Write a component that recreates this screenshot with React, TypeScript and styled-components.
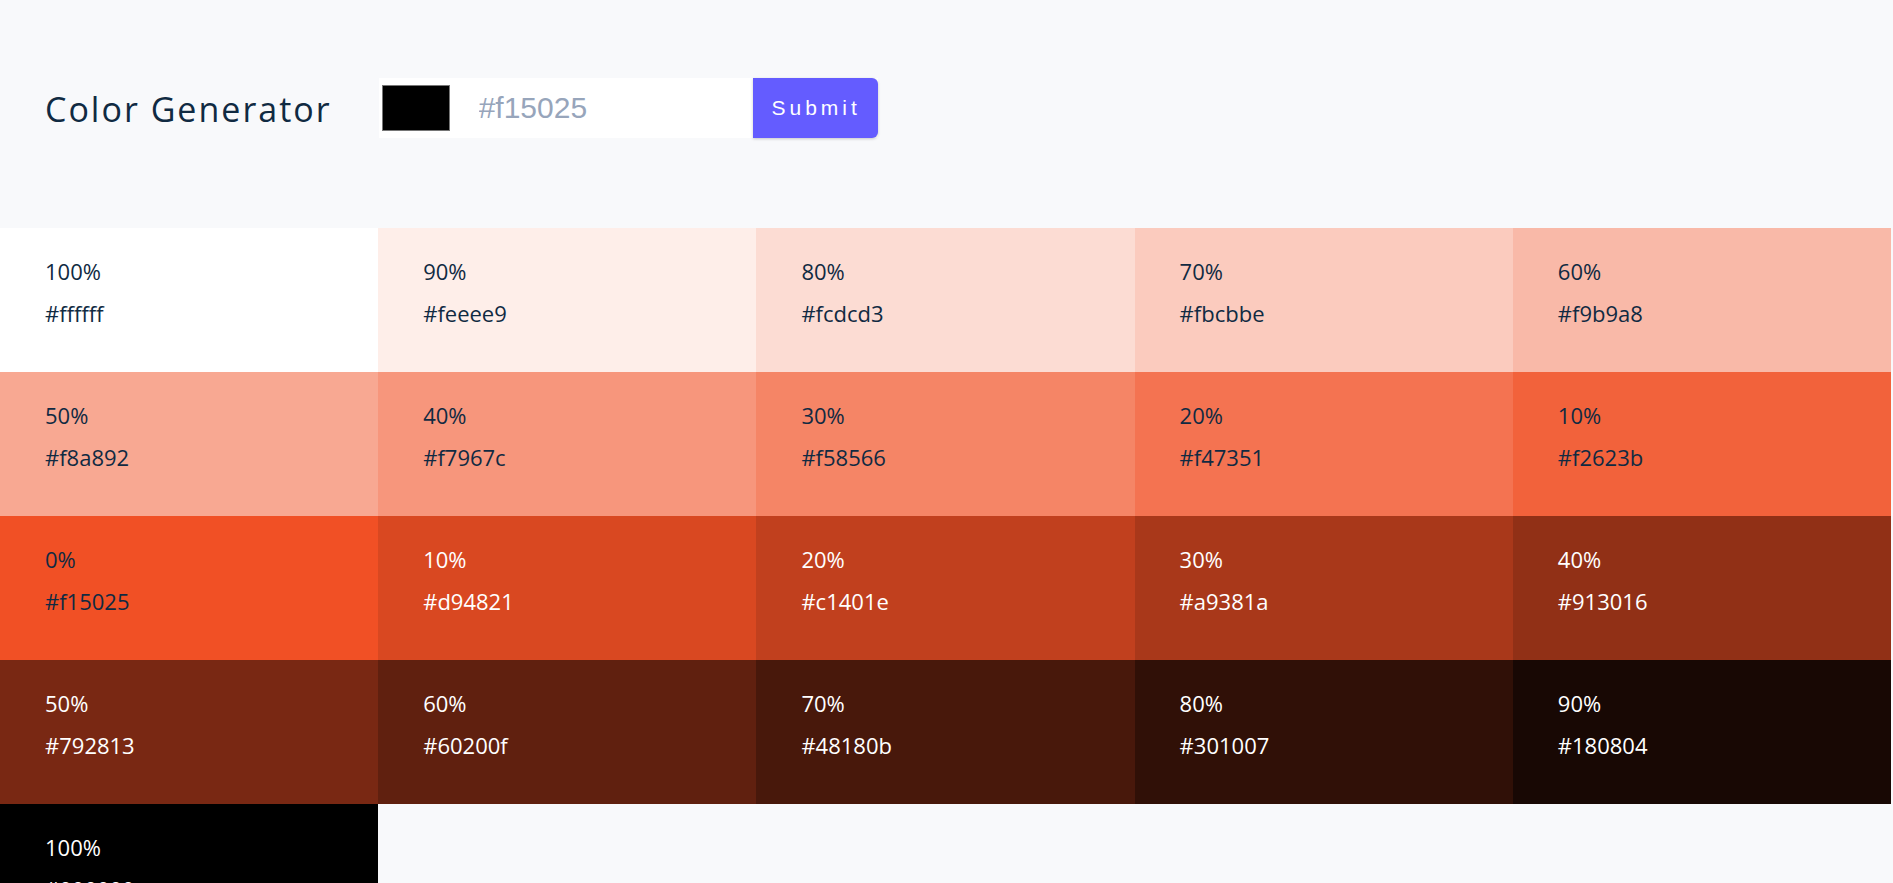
import React, { useState } from 'react'
import styled, { createGlobalStyle } from 'styled-components'

const GlobalStyle = createGlobalStyle`
  * {
    box-sizing: border-box;
  }
  body {
    margin: 0;
    background: #f8f9fb;
    font-family: 'Open Sans', 'Noto Sans', sans-serif;
    color: #102a42;
  }
`

const colors = [
  { weight: 100, hex: 'ffffff' },
  { weight: 90, hex: 'feeee9' },
  { weight: 80, hex: 'fcdcd3' },
  { weight: 70, hex: 'fbcbbe' },
  { weight: 60, hex: 'f9b9a8' },
  { weight: 50, hex: 'f8a892' },
  { weight: 40, hex: 'f7967c' },
  { weight: 30, hex: 'f58566' },
  { weight: 20, hex: 'f47351' },
  { weight: 10, hex: 'f2623b' },
  { weight: 0, hex: 'f15025' },
  { weight: 10, hex: 'd94821' },
  { weight: 20, hex: 'c1401e' },
  { weight: 30, hex: 'a9381a' },
  { weight: 40, hex: '913016' },
  { weight: 50, hex: '792813' },
  { weight: 60, hex: '60200f' },
  { weight: 70, hex: '48180b' },
  { weight: 80, hex: '301007' },
  { weight: 90, hex: '180804' },
  { weight: 100, hex: '000000' },
]

export default function App() {
  const [color, setColor] = useState('')

  return (
    <>
      <GlobalStyle />
      <Header>
        <Title>Color Generator</Title>
        <Form onSubmit={(e) => e.preventDefault()}>
          <ColorPicker type="color" defaultValue="#000000" />
          <HexInput
            type="text"
            value={color}
            placeholder="#f15025"
            onChange={(e) => setColor(e.target.value)}
          />
          <SubmitButton type="submit">Submit</SubmitButton>
        </Form>
      </Header>
      <Colors>
        {colors.map((c, index) => (
          <Swatch key={index} $bg={`#${c.hex}`} $light={index > 10}>
            <Percent>{c.weight}%</Percent>
            <HexValue>#{c.hex}</HexValue>
          </Swatch>
        ))}
      </Colors>
    </>
  )
}

const Header = styled.section`
  height: 228px;
  display: flex;
  align-items: center;
  padding: 0 0 12px 45px;
`

const Title = styled.h3`
  margin: 2px 47px 0 0;
  font-size: 34px;
  font-weight: 400;
  letter-spacing: 2px;
  line-height: 1.25;
  color: #102a42;
`

const Form = styled.form`
  display: flex;
  align-items: stretch;
  height: 60px;
  background: #fff;
`

const ColorPicker = styled.input`
  width: 74px;
  height: 60px;
  padding: 7px 3px;
  border: none;
  background: #fff;
  cursor: pointer;

  &::-webkit-color-swatch-wrapper {
    padding: 0;
  }
  &::-webkit-color-swatch {
    border: 1px solid #767676;
    border-radius: 0;
  }
`

const HexInput = styled.input`
  width: 300px;
  border: 2px solid transparent;
  padding: 0 20px 0 24px;
  font-family: 'Liberation Sans', Arial, sans-serif;
  font-size: 30px;
  color: #102a42;
  background: #fff;
  outline: none;

  &::placeholder {
    color: #97a5bb;
  }
`

const SubmitButton = styled.button`
  width: 125px;
  border: none;
  border-radius: 0 6px 6px 0;
  background: #645cff;
  color: #fff;
  font-family: 'Liberation Sans', Arial, sans-serif;
  font-size: 21px;
  letter-spacing: 4px;
  padding: 0 0 0 2px;
  box-shadow: 0 1px 3px rgba(0, 0, 0, 0.2);
  cursor: pointer;
`

const Colors = styled.section`
  width: 1891px;
  display: grid;
  grid-template-columns: repeat(5, 1fr);
  grid-auto-rows: 144px;
`

const Swatch = styled.article<{ $bg: string; $light: boolean }>`
  background: ${(p) => p.$bg};
  color: ${(p) => (p.$light ? '#fff' : '#102a42')};
  padding: 22px 45px;
  font-size: 22px;
  line-height: 42px;
`

const Percent = styled.p`
  margin: 0;
`

const HexValue = styled.p`
  margin: 0;
`
